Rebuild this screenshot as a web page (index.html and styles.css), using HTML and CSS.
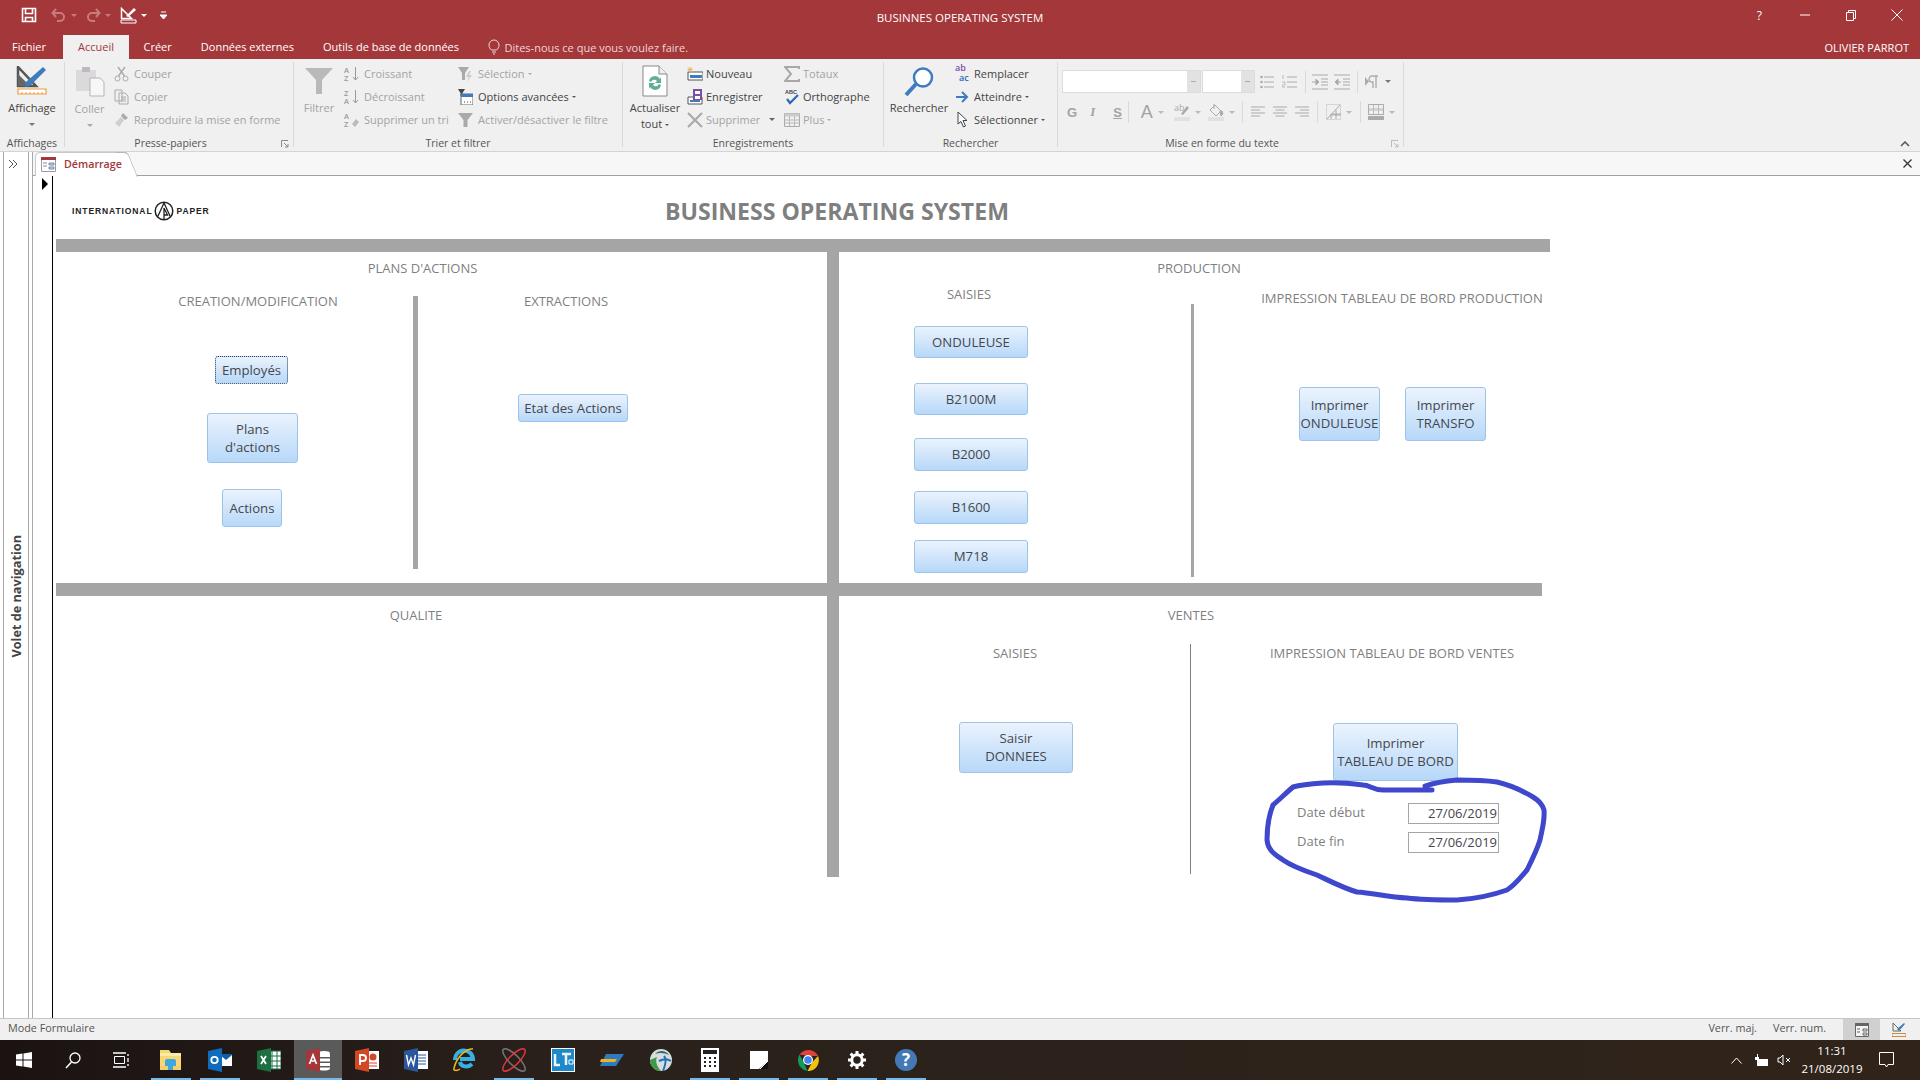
FILE: index.html
```html
<!DOCTYPE html>
<html lang="fr">
<head>
  <meta charset="UTF-8">
  <title>BUSINNES OPERATING SYSTEM</title>
  <link rel="stylesheet" href="styles.css">
</head>
<body>

  <!-- title bar -->
  <div class="titlebar">
    <div class="qat">
      <svg class="qat-save" width="16" height="16" viewBox="0 0 16 16"><path d="M1.500 1.500h13v13h-13z M4.500 1.500v5h7v-5 M4.500 14.500v-4h7v4" fill="none" stroke="#fff" stroke-width="1.600"/></svg>
      <svg class="qat-undo" width="16" height="14" viewBox="0 0 16 14"><path d="M5 1 1.500 5 5 9 M2 5h7a4 4 0 0 1 0 8H6" fill="none" stroke="#c97a7d" stroke-width="2"/></svg>
      <span class="qat-caret dim"></span>
      <svg class="qat-redo" width="16" height="14" viewBox="0 0 16 14"><path d="M11 1l3.500 4L11 9 M14 5H7a4 4 0 0 0 0 8h3" fill="none" stroke="#c97a7d" stroke-width="2"/></svg>
      <span class="qat-caret dim"></span>
      <svg class="qat-view" width="17" height="17" viewBox="0 0 17 17"><path d="M1.500 1.500v10h10z" fill="none" stroke="#fff" stroke-width="1.500"/><path d="M6 9l8-8 2 2-8 7z" fill="#fff"/><path d="M1 13h15v3H1z" fill="none" stroke="#fff"/></svg>
      <span class="qat-caret"></span>
      <svg class="qat-more" width="7" height="8" viewBox="0 0 7 8"><path d="M1 1h5M0 4h7l-3.500 4z" stroke="#fff" fill="#fff"/></svg>
    </div>
    <div class="app-title">BUSINNES OPERATING SYSTEM</div>
    <div class="win-btns">
      <span class="win-help">?</span>
      <svg width="12" height="12" viewBox="0 0 12 12"><path d="M1 6h10" stroke="#fff"/></svg>
      <svg width="12" height="12" viewBox="0 0 12 12"><path d="M1.500 3.500h7v8h-7z M3.500 3V1.500h7v8H9" fill="none" stroke="#fff"/></svg>
      <svg width="12" height="12" viewBox="0 0 12 12"><path d="M.500.500l11 11M11.500.500l-11 11" stroke="#fff"/></svg>
    </div>
  </div>

  <!-- ribbon tabs -->
  <div class="tabs">
    <span class="tab tab-file">Fichier</span>
    <span class="tab tab-active">Accueil</span>
    <span class="tab">Créer</span>
    <span class="tab">Données externes</span>
    <span class="tab">Outils de base de données</span>
    <span class="tell-me">
      <svg width="12" height="16" viewBox="0 0 12 16"><path d="M3.500 11C2 9.500 1 8.500 1 6a5 5 0 0 1 10 0c0 2.500-1 3.500-2.500 5z M4 13h4 M5 15h2" fill="none" stroke="#f0d8d8"/></svg>
      Dites-nous ce que vous voulez faire.
    </span>
    <span class="user">OLIVIER PARROT</span>
  </div>

  <!-- ribbon -->
  <div class="ribbon">
    <div class="group g-views">
      <div class="group-body">
        <div class="big big-view">
          <svg width="32" height="30" viewBox="0 0 32 30"><path d="M2 1v19h18z" fill="none" stroke="#555" stroke-width="2.500"/><path d="M2 8l12 12H2z" fill="#666"/><path d="M10 16 27 1l3 3-15 15-6 2z" fill="#3f7cbf"/><path d="M2 23h28v5H2z" fill="#fff" stroke="#ed9b40" stroke-width="1.200"/><path d="M6 26v2M10 26v2M14 26v2M18 26v2M22 26v2M26 26v2" stroke="#ed9b40"/></svg>
          <span>Affichage</span>
          <i class="caret"></i>
        </div>
      </div>
      <div class="group-label">Affichages</div>
    </div>

    <div class="group g-clip">
      <div class="group-body">
        <div class="big big-paste off">
          <svg width="30" height="31" viewBox="0 0 30 31"><path d="M1 4h20v21H1z" fill="#dcd9dc"/><path d="M7 1h8v5H7z" fill="#bdbabd"/><path d="M15 12h10l4 4v14H15z" fill="#f7f7f7" stroke="#b5b5b5"/></svg>
          <span>Coller</span>
          <i class="caret"></i>
        </div>
        <div class="col col-clip off">
          <div class="item"><svg width="15" height="16" viewBox="0 0 15 16"><circle cx="3.500" cy="12.500" r="2.500" fill="none" stroke="#aaa"/><circle cx="11.500" cy="12.500" r="2.500" fill="none" stroke="#aaa"/><path d="M4.500 10 11 1M10.500 10 4 1" stroke="#aaa" stroke-width="1.400"/></svg>Couper</div>
          <div class="item"><svg width="15" height="16" viewBox="0 0 15 16"><path d="M1 1h7v11H1z M5 4h6l3 3v8H5z" fill="#f0f0f0" stroke="#aaa"/><path d="M7 8h5M7 10h5M7 12h5" stroke="#aaa"/></svg>Copier</div>
          <div class="item item-wide"><svg width="15" height="16" viewBox="0 0 15 16"><path d="M9 1l5 5-3 2-4-4z" fill="#aaa"/><path d="M7 5l3 3-5 7-4-4z" fill="#cfcfcf"/></svg>Reproduire la mise en forme</div>
        </div>
      </div>
      <div class="group-label label-launch">Presse-papiers
        <svg class="launcher" width="8" height="8" viewBox="0 0 8 8"><path d="M.500 7V.500H7 M3 3l4 4M4 7h3V4" fill="none" stroke="#8a8a8a"/></svg>
      </div>
    </div>

    <div class="group g-sort">
      <div class="group-body">
        <div class="big big-filter off">
          <svg width="30" height="28" viewBox="0 0 30 28"><path d="M1 1h28L18 13v14h-6V13z" fill="#b9b9b9"/></svg>
          <span>Filtrer</span>
        </div>
        <div class="col col-sort off">
          <div class="item"><span class="az">A<br>Z</span><svg width="7" height="16" viewBox="0 0 7 16"><path d="M3.500 1v13M1 11l2.500 3L6 11" fill="none" stroke="#999"/></svg>Croissant</div>
          <div class="item"><span class="az">Z<br>A</span><svg width="7" height="16" viewBox="0 0 7 16"><path d="M3.500 1v13M1 11l2.500 3L6 11" fill="none" stroke="#999"/></svg>Décroissant</div>
          <div class="item"><span class="az">A<br>Z</span><svg width="7" height="16" viewBox="0 0 7 16"><path d="M0 12l4-5 3 3-4 5z" fill="#bbb"/></svg>Supprimer un tri</div>
        </div>
        <div class="col col-filter">
          <div class="item off"><svg width="15" height="16" viewBox="0 0 15 16"><path d="M0 1h11L7 7v7H4V7z" fill="#aaa"/><path d="M11 5 8 11h3l-2 5 5-7h-3l2-4z" fill="#ccc"/></svg>Sélection<i class="caret-in"></i></div>
          <div class="item"><svg width="15" height="16" viewBox="0 0 15 16"><path d="M0 0h7L4.500 4v3h-2V4z" fill="#444"/><path d="M3 5h12v11H3z" fill="#fff" stroke="#666"/><path d="M3 5h12v3H3z" fill="#3f7cbf"/><path d="M6 13h1M9 13h1M12 13h1" stroke="#444"/></svg>Options avancées<i class="caret-in"></i></div>
          <div class="item off"><svg width="15" height="16" viewBox="0 0 15 16"><path d="M0 1h15L9.500 8v7h-4V8z" fill="#aaa"/></svg>Activer/désactiver le filtre</div>
        </div>
      </div>
      <div class="group-label">Trier et filtrer</div>
    </div>

    <div class="group g-records">
      <div class="group-body">
        <div class="big big-refresh">
          <svg width="26" height="32" viewBox="0 0 26 32"><path d="M1 1h16l8 8v22H1z" fill="#fff" stroke="#888"/><path d="M17 1v8h8" fill="#eee" stroke="#888"/><path d="M7 16a6 6 0 0 1 11-2l1-2v6h-6l2-2a3.500 3.500 0 0 0-6 1z M19 20a6 6 0 0 1-11 2l-1 2v-6h6l-2 2a3.500 3.500 0 0 0 6-1z" fill="#63ad92"/></svg>
          <span>Actualiser</span>
          <span>tout<i class="caret-in"></i></span>
        </div>
        <div class="col col-new">
          <div class="item"><svg width="16" height="16" viewBox="0 0 16 16"><path d="M1 6h15v8H1z" fill="#fff" stroke="#555"/><path d="M3 9h12v3H3z" fill="#3f7cbf"/><path d="M3 1v5M.500 3.500h5M1 1.500l4 4M5 1.500l-4 4" stroke="#eeb75c"/></svg>Nouveau</div>
          <div class="item"><svg width="16" height="16" viewBox="0 0 16 16"><path d="M1 8h14v7H1z" fill="#fff" stroke="#555"/><path d="M3 11h10v2H3z" fill="#3f7cbf"/><path d="M6 0h9v11H6z" fill="#7a4fa8"/><path d="M8 2h5v3H8zM8 7h5v3H8z" fill="#fff"/></svg>Enregistrer</div>
          <div class="item off item-del"><svg width="16" height="16" viewBox="0 0 16 16"><path d="M1 1l14 14M15 1 1 15" stroke="#aaa" stroke-width="2.200"/></svg>Supprimer<i class="caret-del"></i></div>
        </div>
        <div class="col col-totals">
          <div class="item off"><svg width="16" height="16" viewBox="0 0 16 16"><path d="M15 3V1H1l6 7-6 7h14v-2" fill="none" stroke="#a8a8a8" stroke-width="2"/></svg>Totaux</div>
          <div class="item"><svg class="icon-text" width="16" height="17" viewBox="0 0 16 17"><text x="1" y="6" class="abc">ABC</text><path d="M3 11l3 4 8-8" fill="none" stroke="#2c6ab0" stroke-width="2.200"/></svg>Orthographe</div>
          <div class="item off"><svg width="16" height="16" viewBox="0 0 16 16"><path d="M.500 1.500h15v13H.500z" fill="#efefef" stroke="#aaa"/><path d="M.500 1.500h15v3H.500z" fill="#ccc"/><path d="M1 8h14M1 11h14M5.500 4v10M10.500 4v10" stroke="#bbb"/></svg>Plus<i class="caret-in"></i></div>
        </div>
      </div>
      <div class="group-label">Enregistrements</div>
    </div>

    <div class="group g-find">
      <div class="group-body">
        <div class="big big-find">
          <svg width="30" height="31" viewBox="0 0 30 31"><circle cx="19" cy="11.500" r="9" fill="#fff" stroke="#3f7cbf" stroke-width="2.500"/><path d="M12 18 2 29" stroke="#3f7cbf" stroke-width="4"/></svg>
          <span>Rechercher</span>
        </div>
        <div class="col col-find">
          <div class="item"><svg class="icon-text" width="17" height="17" viewBox="0 0 17 17"><text x="1" y="6" class="ab">ab</text><text x="5" y="16" class="ac">ac</text></svg>Remplacer</div>
          <div class="item"><svg width="17" height="16" viewBox="0 0 17 16"><path d="M2 8h11M8 3l5 5-5 5" fill="none" stroke="#3f7cbf" stroke-width="2"/></svg>Atteindre<i class="caret-in"></i></div>
          <div class="item"><svg width="17" height="17" viewBox="0 0 17 17"><path d="M4 1v12l3-2.500L9.500 16l2-1L9 9.500h4z" fill="#fff" stroke="#444"/></svg>Sélectionner<i class="caret-in"></i></div>
        </div>
      </div>
      <div class="group-label">Rechercher</div>
    </div>

    <div class="group g-font">
      <div class="group-body font-body">
        <div class="font-row">
          <div class="combo combo-name"><i class="caret"></i></div>
          <div class="combo combo-size"><i class="caret"></i></div>
          <svg class="fi-bul" width="14" height="16" viewBox="0 0 14 16"><path d="M4 3h10M4 8h10M4 13h10" stroke="#aaa"/><circle cx="1.500" cy="3" r="1.300" fill="#aaa"/><circle cx="1.500" cy="8" r="1.300" fill="#aaa"/><circle cx="1.500" cy="13" r="1.300" fill="#aaa"/></svg>
          <svg class="fi-num" width="15" height="16" viewBox="0 0 15 16"><path d="M5 3h10M5 8h10M5 13h10" stroke="#aaa"/><path d="M1 1v4M0 8h3v3H0v2h3" fill="none" stroke="#bbb"/></svg>
          <span class="fsep fsep-a"></span>
          <svg width="16" height="16" viewBox="0 0 16 16"><path d="M0 1h16M9 5h7M9 8h7M9 11h7M0 15h16" stroke="#aaa"/><path d="M0 8h4M4 5l3 3-3 3z" stroke="#aaa" fill="#aaa"/></svg>
          <svg class="fi-out" width="16" height="16" viewBox="0 0 16 16"><path d="M0 1h16M9 5h7M9 8h7M9 11h7M0 15h16" stroke="#aaa"/><path d="M3 8h4M4 5 1 8l3 3z" stroke="#aaa" fill="#aaa"/></svg>
          <span class="fsep fsep-b"></span>
          <svg class="fi-para" width="14" height="14" viewBox="0 0 14 14"><path d="M0 2v9l4-4.500z" fill="#aaa"/><path d="M9 1H7a3 3 0 0 0 0 6h1V13M11 1v12M7 1h6" fill="none" stroke="#aaa" stroke-width="1.300"/></svg>
          <i class="caret fi-caret"></i>
        </div>
        <div class="font-row font-row2">
          <b class="fmt fmt-g">G</b>
          <i class="fmt fmt-i">I</i>
          <span class="fmt fmt-s">S</span>
          <span class="fsep fsep-c"></span>
          <span class="fmt fmt-a">A</span>
          <i class="caret"></i>
          <svg class="fi-hl icon-text" width="16" height="18" viewBox="0 0 16 18"><text x="0" y="8" class="hl">ab</text><path d="M7 11l6-8 2 2-6 7z" fill="#aaa"/><path d="M0 14h16v4H0z" fill="#e3dfe3"/></svg>
          <i class="caret"></i>
          <svg class="fi-fill" width="16" height="18" viewBox="0 0 16 18"><path d="M2 7l5-5 6 6-5 5z" fill="none" stroke="#aaa"/><path d="M6 1v5M12 8h2l1 3-2 2z" stroke="#aaa" fill="#aaa"/><path d="M0 14h16v4H0z" fill="#e3dfe3"/></svg>
          <i class="caret"></i>
          <span class="fsep fsep-d"></span>
          <svg width="14" height="12" viewBox="0 0 14 12"><path d="M0 1h14M0 4h9M0 7h14M0 10h9" stroke="#aaa"/></svg>
          <svg class="fi-al" width="14" height="12" viewBox="0 0 14 12"><path d="M0 1h14M2.500 4h9M0 7h14M2.500 10h9" stroke="#aaa"/></svg>
          <svg class="fi-al" width="14" height="12" viewBox="0 0 14 12"><path d="M0 1h14M5 4h9M0 7h14M5 10h9" stroke="#aaa"/></svg>
          <span class="fsep fsep-e"></span>
          <svg width="15" height="16" viewBox="0 0 15 16"><path d="M.500.500h14v15H.500z" fill="none" stroke="#bbb" stroke-dasharray="1 1"/><path d="M1 15 14 1M5 15V10h10M10 15V6M5 11h10" stroke="#aaa" fill="none"/></svg>
          <i class="caret fi-c2"></i>
          <span class="fsep fsep-f"></span>
          <svg width="16" height="16" viewBox="0 0 16 16"><path d="M.500.500h15v10H.500z" fill="#efefef" stroke="#aaa"/><path d="M1 4h14v3H1z" fill="#d8d0d8"/><path d="M5.500 1v9M10.500 1v9" stroke="#bbb"/><path d="M0 12h16v4H0z" fill="#aaa"/></svg>
          <i class="caret fi-c3"></i>
        </div>
      </div>
      <div class="group-label label-launch">Mise en forme du texte
        <svg class="launcher" width="8" height="8" viewBox="0 0 8 8"><path d="M.500 7V.500H7 M3 3l4 4M4 7h3V4" fill="none" stroke="#bbb"/></svg>
      </div>
    </div>

    <svg class="collapse" width="10" height="6" viewBox="0 0 10 6"><path d="M1 5l4-4 4 4" fill="none" stroke="#555" stroke-width="1.500"/></svg>
  </div>

  <!-- workspace -->
  <div class="workspace">
    <div class="nav-pane">
      <svg class="nav-arrows" width="10" height="8" viewBox="0 0 10 8"><path d="M1 0l4 4-4 4M5 0l4 4-4 4" fill="none" stroke="#555"/></svg>
      <div class="nav-title">Volet de navigation</div>
    </div>
    <div class="main">
      <div class="doc-tabs">
        <div class="doc-tab">
          <svg width="15" height="15" viewBox="0 0 15 15"><path d="M.500.500h14v14H.500z" fill="#fff" stroke="#9a9ab0"/><path d="M0 0h15v3H0z" fill="#a4373a"/><path d="M2 6h4M2 9h4M8 6h5v2H8zM8 10h5v2H8z" stroke="#7b8fa8" fill="#c7d2de"/></svg>
          <span class="doc-name">Démarrage</span>
        </div>
        <svg class="doc-close" width="9" height="9" viewBox="0 0 9 9"><path d="M.500.500l8 8M8.500.500l-8 8" stroke="#333" stroke-width="1.300"/></svg>
      </div>
      <div class="doc">
        <div class="selector"><span class="sel-arrow"></span></div>

        <div class="form">
          <div class="form-head">
            <div class="logo">
              <span>INTERNATIONAL</span>
              <svg width="20" height="20" viewBox="0 0 20 20"><circle cx="10" cy="10" r="8.800" fill="#fff" stroke="#222" stroke-width="1.500"/><path d="M10 2 3.500 16M10 2l6.500 14M10 7v11M10 7l3.500 7H10" fill="none" stroke="#222" stroke-width="1.300"/></svg>
              <span>PAPER</span>
            </div>
            <div class="form-title">BUSINESS OPERATING SYSTEM</div>
          </div>
          <div class="hbar hbar-top"></div>

          <div class="form-body">
            <!-- plans d'actions -->
            <section class="cell">
              <div class="lbl lbl-plans">PLANS D'ACTIONS</div>
              <div class="cols">
                <div class="pane pane-create">
                  <div class="lbl lbl-create">CREATION/MODIFICATION</div>
                  <div class="btn btn-emp">Employés</div>
                  <div class="btn btn-plans">Plans<br>d'actions</div>
                  <div class="btn btn-act">Actions</div>
                </div>
                <div class="vbar vbar-plans"></div>
                <div class="pane">
                  <div class="lbl lbl-extract">EXTRACTIONS</div>
                  <div class="btn btn-etat">Etat des Actions</div>
                </div>
              </div>
            </section>

            <div class="vbar-main"></div>

            <!-- production -->
            <section class="cell">
              <div class="lbl lbl-prod">PRODUCTION</div>
              <div class="cols">
                <div class="pane pane-saisies">
                  <div class="lbl lbl-saisies">SAISIES</div>
                  <div class="btn btn-line btn-ond">ONDULEUSE</div>
                  <div class="btn btn-line btn-b21">B2100M</div>
                  <div class="btn btn-line btn-b20">B2000</div>
                  <div class="btn btn-line btn-b16">B1600</div>
                  <div class="btn btn-line btn-m7">M718</div>
                </div>
                <div class="vbar vbar-prod"></div>
                <div class="pane">
                  <div class="lbl lbl-print">IMPRESSION TABLEAU DE BORD PRODUCTION</div>
                  <div class="print-btns">
                    <div class="btn btn-print">Imprimer<br>ONDULEUSE</div>
                    <div class="btn btn-print">Imprimer<br>TRANSFO</div>
                  </div>
                </div>
              </div>
            </section>

            <div class="hbar hbar-mid"></div>

            <!-- qualite -->
            <section class="cell cell-low">
              <div class="lbl lbl-qual">QUALITE</div>
            </section>

            <!-- ventes -->
            <section class="cell cell-low">
              <div class="lbl lbl-ventes">VENTES</div>
              <div class="cols">
                <div class="pane pane-vsaisies">
                  <div class="lbl lbl-vsaisies">SAISIES</div>
                  <div class="btn btn-saisir">Saisir<br>DONNEES</div>
                </div>
                <div class="vline"></div>
                <div class="pane">
                  <div class="lbl lbl-vprint">IMPRESSION TABLEAU DE BORD VENTES</div>
                  <div class="btn btn-tab">Imprimer<br>TABLEAU DE BORD</div>
                  <div class="date-row date-first"><span>Date début</span><div class="field">27/06/2019</div></div>
                  <div class="date-row"><span>Date fin</span><div class="field">27/06/2019</div></div>
                </div>
              </div>
            </section>
          </div>

          <!-- hand drawn circle, sits over the form -->
          <svg class="scribble" width="295" height="130" viewBox="0 0 295 130"><path d="M174 15 125 15C115 15 112 10 105 10 90 8 78 7 65 8 50 9 42 10 35 12 28 18 22 24 15 30 11 40 9 55 9 65 10 76 18 80 25 85 35 92 47 96 59 100 72 106 85 113 99 117 115 118 130 122 149 123 165 125 182 125 199 125 215 124 235 120 249 115 257 110 263 102 269 95 274 85 279 75 282 65 284 55 287 45 286 35 284 28 280 25 275 22 265 16 252 10 239 7 225 5 212 5 199 5 188 6 176 8 167 11" fill="none" stroke="#3f48cc" stroke-width="5" stroke-linecap="round" stroke-linejoin="round"/></svg>
        </div>
      </div>
    </div>
  </div>

  <!-- status bar -->
  <div class="statusbar">
    <span class="status-mode">Mode Formulaire</span>
    <span class="status-key">Verr. maj.</span>
    <span class="status-key">Verr. num.</span>
    <span class="status-view status-on"><svg width="14" height="14" viewBox="0 0 14 14"><path d="M.500.500h13v13H.500z" fill="#f5f5f5" stroke="#666"/><path d="M0 0h14v3H0z" fill="#666"/><path d="M2 6h3M2 9h3M8 6h4v2H8zM8 10h4v2H8z" stroke="#666" fill="none"/></svg></span>
    <span class="status-view"><svg width="14" height="16" viewBox="0 0 14 16"><path d="M1 1v8h8z" fill="none" stroke="#666"/><path d="M5 7l7-6 1 1-6 7z" fill="#3f7cbf"/><path d="M0 11.500h14v3H0z" fill="none" stroke="#c98f3f"/></svg></span>
  </div>

  <!-- taskbar -->
  <div class="taskbar">
    <div class="task"><svg width="16" height="16" viewBox="0 0 16 16"><path d="M0 2.500 6.500 1.600V7.500H0zM7.500 1.400 16 0v7.500H7.500zM0 8.500h6.500v5.900L0 13.500zM7.500 8.500H16V16l-8.500-1.400z" fill="#fff"/></svg></div>
    <div class="task"><svg width="16" height="17" viewBox="0 0 16 17"><circle cx="10" cy="6" r="5" fill="none" stroke="#fff" stroke-width="1.300"/><path d="M6.500 10 1 16" stroke="#fff" stroke-width="1.500"/></svg></div>
    <div class="task"><svg class="icon-taskview" width="17" height="16" viewBox="0 0 17 16"><path d="M2.500 4.500h10v7h-10z" fill="none" stroke="#fff"/><path d="M1 1h13M1 15h13M16 2v2M16 6v4M16 12v2" stroke="#fff" stroke-width="1.300"/></svg></div>
    <div class="task task-run"><svg width="22" height="20" viewBox="0 0 22 20"><path d="M0 0h9l2 3h10v17H0z" fill="#f7d774"/><path d="M0 3h21v3H0z" fill="#fbe9a6"/><path d="M5 16v-5a2 2 0 0 1 2-2h7a2 2 0 0 1 2 2v5h-3v-3H8v3z" fill="#3fa7e0"/><path d="M0 16h21v4H0z" fill="#f3cf6c"/><path d="M8 13h5v7H8z" fill="#3fa7e0"/></svg></div>
    <div class="task task-run"><svg width="24" height="24" viewBox="0 0 24 24"><path d="M12 7h12v11H12z" fill="#fff"/><path d="M12 7l6 5 6-5v-1H12z" fill="#0f5ea8"/><path d="M0 3l14-3v24L0 21z" fill="#0f6cbd"/><circle cx="6.500" cy="12" r="3.200" fill="none" stroke="#fff" stroke-width="1.800"/></svg></div>
    <div class="task"><svg width="24" height="24" viewBox="0 0 24 24"><path d="M12 3h12v18H12z" fill="#fff" stroke="#1d6f42"/><path d="M15 3v18M20 3v18M12 8h12M12 13h12M12 18h12" stroke="#1d6f42"/><path d="M0 3l14-3v24L0 21z" fill="#1d6f42"/><path d="M4 8l5 8M9 8l-5 8" stroke="#fff" stroke-width="1.800"/></svg></div>
    <div class="task task-run task-active"><svg width="24" height="24" viewBox="0 0 24 24"><ellipse cx="18" cy="5" rx="6" ry="2" fill="#fff"/><path d="M12 6h12v3H12zM12 10.500h12v3H12zM12 15h12v3H12zM12 19.500h12v1a6 2 0 0 1-12 0z" fill="#fff"/><path d="M0 3l14-3v24L0 21z" fill="#a4373a"/><path d="M3.500 16 7 7l3.500 9M4.800 13h4.400" fill="none" stroke="#fff" stroke-width="1.700"/></svg></div>
    <div class="task"><svg width="24" height="24" viewBox="0 0 24 24"><path d="M12 3h12v18H12z" fill="#fff"/><circle cx="18" cy="9" r="3.500" fill="#d24726"/><path d="M14 15h8M14 18h8" stroke="#d24726"/><path d="M0 3l14-3v24L0 21z" fill="#d24726"/><path d="M5 17V7h3a3 3 0 0 1 0 6H5" fill="none" stroke="#fff" stroke-width="1.800"/></svg></div>
    <div class="task"><svg width="24" height="24" viewBox="0 0 24 24"><path d="M12 3h12v18H12z" fill="#fff"/><path d="M14 7h8M14 10h8M14 13h8M14 16h8" stroke="#2b579a"/><path d="M0 3l14-3v24L0 21z" fill="#2b579a"/><path d="M2.500 7l2 10 2.500-7 2.500 7 2-10" fill="none" stroke="#fff" stroke-width="1.400"/></svg></div>
    <div class="task"><svg width="24" height="24" viewBox="0 0 24 24"><path d="M2 12a9 9 0 0 1 18-1H7" fill="none" stroke="#38b0e3" stroke-width="4"/><path d="M7 14c1 5 8 6 12 2" fill="none" stroke="#38b0e3" stroke-width="4"/><path d="M20 1C14 0 4 8 1 20c-1 3 3 3 6 1" fill="none" stroke="#f2b90f" stroke-width="1.500"/></svg></div>
    <div class="task task-run"><svg width="24" height="24" viewBox="0 0 24 24"><g fill="none" stroke-width="1.500"><ellipse cx="12" cy="12" rx="15" ry="5" transform="rotate(45 12 12)" stroke="#777"/><ellipse cx="12" cy="12" rx="15" ry="5" transform="rotate(-45 12 12)" stroke="#e5363d"/></g></svg></div>
    <div class="task"><svg width="24" height="24" viewBox="0 0 24 24"><path d="M0 0h24v24H0z" fill="#fff"/><path d="M1 1h22v22H1z" fill="#1e88c9"/><path d="M4 6v11h5M11 6h9M15 6v11" fill="none" stroke="#eaf4fb" stroke-width="2.500"/><path d="M18 12h4v4h-4z" fill="none" stroke="#fff"/></svg></div>
    <div class="task"><svg width="24" height="12" viewBox="0 0 24 12"><path d="M6 0h18l-8 12H0z" fill="#2d7cc1"/><path d="M1 5h16l-2 3H0z" fill="#f2b21b"/></svg></div>
    <div class="task"><svg width="22" height="22" viewBox="0 0 22 22"><circle cx="11" cy="11" r="11" fill="#d9dcdc"/><path d="M0 11a11 11 0 0 0 11 11c-4-5-6-9-4-14z" fill="#3e9a45"/><path d="M5 5c5-5 11-3 14 1-4-2-9-3-14-1z" fill="#2c6f6f"/><path d="M14 7c3 3 1 10-1 15M9 12c4-2 9-2 12 0" fill="none" stroke="#1d71b8" stroke-width="2"/></svg></div>
    <div class="task task-run"><svg width="18" height="24" viewBox="0 0 18 24"><path d="M0 0h18v24H0z" fill="#fff"/><path d="M2 2h14v4H2z" fill="#222"/><path d="M3 10h2M8 10h2M13 10h2M3 14h2M8 14h2M13 14h2M3 18h2M8 18h2M13 18h2" stroke="#222" stroke-width="2"/></svg></div>
    <div class="task task-run"><svg width="18" height="18" viewBox="0 0 18 18"><path d="M0 0h18v18H0z" fill="#fff"/><path d="M18 10v8H9z" fill="#111"/><path d="M10 18l8-8" stroke="#fff"/></svg></div>
    <div class="task task-run"><svg width="22" height="22" viewBox="0 0 22 22"><path d="M2.500 5.500A10.800 10.800 0 0 1 21 7H11z" fill="#db4437"/><path d="M21 7a10.800 10.800 0 0 1-10.500 15L15 13.500z" fill="#f4c20d"/><path d="M2.500 5.500 7 14l3.500 8A11 11 0 0 1 2.500 5.500z" fill="#0f9d58"/><circle cx="11" cy="11" r="5" fill="#fff"/><circle cx="11" cy="11" r="3.800" fill="#4285f4"/></svg></div>
    <div class="task task-run"><svg width="18" height="18" viewBox="0 0 18 18"><circle cx="9" cy="9" r="5.200" fill="none" stroke="#fff" stroke-width="3"/><path d="M9 0v4M9 14v4M0 9h4M14 9h4M2.600 2.600l2.900 2.900M12.500 12.500l2.900 2.900M15.400 2.600l-2.900 2.900M5.500 12.500l-2.900 2.900" stroke="#fff" stroke-width="3"/></svg></div>
    <div class="task task-run"><svg width="22" height="22" viewBox="0 0 22 22"><circle cx="11" cy="11" r="11" fill="#4379b5"/><text x="11" y="17" class="help-mark">?</text></svg></div>

    <div class="tray">
      <svg width="11" height="7" viewBox="0 0 11 7"><path d="M.500 6.500l5-5.500 5 5.500" fill="none" stroke="#fff"/></svg>
      <svg class="tray-bat" width="14" height="14" viewBox="0 0 14 14"><path d="M1 4h2V1h1v3h1v3H1z" fill="#fff"/><path d="M3 6h11v7H3z" fill="#fff"/></svg>
      <svg class="tray-vol" width="14" height="14" viewBox="0 0 14 14"><path d="M1 5h2l3-3v10L3 9H1z" fill="none" stroke="#fff"/><path d="M9 5l4 4M13 5 9 9" stroke="#fff"/></svg>
      <div class="clock"><span>11:31</span><span>21/08/2019</span></div>
      <svg class="tray-note" width="15" height="16" viewBox="0 0 15 16"><path d="M.500.500h14v12H9l-1.500 2.500L6 12.500H.500z" fill="none" stroke="#fff"/></svg>
    </div>
  </div>

</body>
</html>
```

FILE: styles.css
```css
* {
  box-sizing: border-box;
}
html, body {
  margin: 0;
  height: 100%;
}
body {
  width: 1920px;
  height: 1080px;
  overflow: hidden;
  display: flex;
  flex-direction: column;
  font-family: "Open Sans", "Noto Sans", sans-serif;
  font-size: 11px;
  color: #444;
  background: #fff;
}
svg {
  display: block;
  flex: none;
}
.icon-text {
  overflow: visible;
}

/* title bar */
.titlebar {
  height: 35px;
  background: #a4373a;
  color: #fff;
  display: flex;
  align-items: flex-start;
  position: relative;
}
.qat {
  width: 400px;
  display: flex;
  align-items: center;
  height: 30px;
  padding-left: 21px;
}
.qat-undo { margin-left: 14px; }
.qat-redo { margin-left: 8px; }
.qat-view { margin-left: 9px; }
.qat-more { margin-left: 13px; }
.qat-caret {
  width: 0;
  height: 0;
  margin-left: 4px;
  border: 3px solid transparent;
  border-top-color: #fff;
  border-bottom: 0;
}
.qat-caret.dim { border-top-color: #c97a7d; }
.app-title {
  width: 1120px;
  text-align: center;
  font-size: 11.500px;
  line-height: 35px;
}
.win-btns {
  flex: 1;
  display: flex;
  justify-content: flex-end;
  align-items: center;
  gap: 34px;
  height: 30px;
  padding-right: 17px;
}
.win-help { font-size: 12px; margin-right: 3px; }

/* tabs */
.tabs {
  height: 24px;
  background: #a4373a;
  color: #fff;
  display: flex;
  align-items: center;
  font-size: 11px;
}
.tab {
  height: 24px;
  line-height: 24px;
  padding: 0 14.500px;
}
.tab-file {
  width: 63px;
  padding: 0 0 0 12px;
}
.tab-active {
  width: 66px;
  padding: 0;
  text-align: center;
  background: #f0f0f0;
  color: #a4373a;
}
.tell-me {
  display: flex;
  align-items: center;
  gap: 5px;
  margin-left: 14px;
  color: #f0d5d5;
  white-space: nowrap;
}
.user {
  margin-left: auto;
  padding-right: 11px;
}

/* ribbon */
.ribbon {
  height: 93px;
  background: #f0f0f0;
  border-bottom: 1px solid #d4d4d4;
  display: flex;
  position: relative;
}
.group {
  border-right: 1px solid #dadada;
  margin-top: 3px;
  height: 85px;
  flex: none;
}
.g-views { width: 65px; }
.g-clip { width: 229px; }
.g-sort { width: 329px; }
.g-records { width: 261px; }
.g-find { width: 174px; }
.g-font { width: 346px; }
.group-body {
  height: 72px;
  display: flex;
  position: relative;
}
.group-label {
  height: 13px;
  line-height: 18px;
  text-align: center;
  color: #555;
  font-size: 10.500px;
  position: relative;
}
.label-launch { padding-right: 17px; }
.launcher {
  position: absolute;
  right: 4px;
  top: 6px;
}
.big {
  display: flex;
  flex-direction: column;
  align-items: center;
  padding-top: 4px;
  white-space: nowrap;
  line-height: 16px;
}
.big svg { margin-bottom: 4px; }
.big-view { width: 64px; }
.big-view svg { margin-bottom: 4px; }
.big-view .caret { margin-top: 7px; }
.big-paste { width: 49px; }
.big-paste .caret { margin-top: 7px; }
.big-filter { width: 50px; padding-top: 5px; }
.big-filter svg { margin-bottom: 5px; }
.big-refresh { width: 64px; padding-top: 3px; }
.big-refresh svg { margin-bottom: 3px; }
.big-find { width: 70px; }
.big-find svg { margin-bottom: 3px; }
.off, .off .item { color: #a3a3a3; }
.col {
  display: flex;
  flex-direction: column;
}
.item {
  height: 23px;
  display: flex;
  align-items: center;
  gap: 5px;
  white-space: nowrap;
  color: #444;
}
.item.off { color: #a3a3a3; }
.col-sort { width: 114px; }
.col-new { width: 97px; }
.col-totals { width: 90px; }
.col-new .item, .col-totals .item, .col-find .item { gap: 3px; }
.az {
  font-size: 7.500px;
  line-height: 8px;
  width: 7px;
  color: #999;
  font-weight: 600;
  margin-right: -4px;
}
.caret {
  display: block;
  width: 0;
  height: 0;
  border: 3px solid transparent;
  border-top-color: #777;
  border-bottom: 0;
}
.off .caret { border-top-color: #aaa; }
.caret-in {
  display: inline-block;
  vertical-align: middle;
  width: 0;
  height: 0;
  margin-left: 3px;
  border: 2.500px solid transparent;
  border-top-color: #555;
  border-bottom: 0;
}
.item .caret-in { margin-left: -2px; }
.col-new .caret-in, .col-totals .caret-in, .col-find .caret-in { margin-left: 0; }
.off .caret-in { border-top-color: #aaa; }
.caret-del {
  display: inline-block;
  width: 0;
  height: 0;
  margin-left: 6px;
  border: 3px solid transparent;
  border-top-color: #666;
  border-bottom: 0;
}
.abc { font: 700 5.500px "Liberation Sans", sans-serif; fill: #444; }
.ab { font: 600 9px "Open Sans", sans-serif; fill: #7a4fa8; }
.ac { font: 600 9px "Open Sans", sans-serif; fill: #2c6ab0; }
.hl { font: 400 9px "Open Sans", sans-serif; fill: #aaa; }
.help-mark {
  font: 700 17px "Open Sans", sans-serif;
  fill: #fff;
  text-anchor: middle;
}

/* font group of the ribbon */
.font-body {
  flex-direction: column;
  padding-left: 4px;
}
.font-row {
  display: flex;
  align-items: center;
  height: 23px;
  margin-top: 8px;
}
.font-row2 {
  height: 24px;
  margin-top: 7px;
}
.combo {
  height: 23px;
  background: #fff;
  border: 1px solid #dcdcdc;
  display: flex;
  justify-content: flex-end;
  align-items: center;
}
.combo .caret {
  width: 13px;
  height: 21px;
  border: 0;
  background: #e2e2e2 linear-gradient(#aaa, #aaa) center no-repeat;
  background-size: 5px 1px;
}
.combo-name { width: 139px; margin-right: 1px; }
.combo-size { width: 53px; }
.fi-bul { margin-left: 5px; }
.fi-num { margin-left: 8px; }
.fi-out { margin-left: 6px; }
.fi-para { margin-left: 7px; }
.fi-caret { margin-left: 6px; }
.fsep {
  display: block;
  width: 1px;
  height: 22px;
  background: #dadada;
}
.fsep-a { margin: 0 6px 0 8px; }
.fsep-b { margin-left: 7px; }
.fmt {
  font-family: "Liberation Sans", sans-serif;
  font-size: 13px;
  color: #a3a3a3;
  font-weight: 700;
  font-style: normal;
}
.fmt-g { margin-left: 5px; }
.fmt-i { margin-left: 13px; font-style: italic; font-family: "Liberation Serif", serif; }
.fmt-s { margin-left: 18px; text-decoration: underline; }
.fsep-c { margin: 0 12px 0 6px; }
.fmt-a { font-size: 18px; font-weight: 400; }
.font-row2 .caret { margin-left: 5px; border-top-color: #bbb; }
.fi-hl { margin-left: 10px; }
.fi-fill { margin-left: 7px; }
.fsep-d { margin: 0 8px 0 7px; }
.fi-al { margin-left: 8px; }
.fsep-e { margin: 0 8px 0 8px; }
.fsep-f { margin: 0 7px 0 8px; }
.collapse {
  position: absolute;
  right: 10px;
  bottom: 4px;
}

/* workspace */
.workspace {
  flex: 1;
  display: flex;
  min-height: 0;
  border-bottom: 1px solid #c6c6c6;
}
.nav-pane {
  width: 33px;
  flex: none;
  background: #fff;
  box-shadow: inset 3px 0 0 #fff, inset 4px 0 0 #a8a8a8;
  border-right: 1px solid #a8a8a8;
  position: relative;
  padding-top: 8px;
}
.nav-pane::after {
  content: "";
  position: absolute;
  top: 0;
  bottom: 0;
  right: 3px;
  width: 1px;
  background: #a8a8a8;
}
.nav-arrows { margin-left: 8px; }
.nav-title {
  writing-mode: vertical-rl;
  transform: rotate(180deg);
  font-size: 12.700px;
  font-weight: 700;
  color: #444;
  margin: 367px 0 0 7px;
  white-space: nowrap;
}
.main {
  flex: 1;
  display: flex;
  flex-direction: column;
  min-width: 0;
}
.doc-tabs {
  height: 24px;
  flex: none;
  background: #f7f7f7;
  border-bottom: 1px solid #a0a0a0;
  display: flex;
  align-items: center;
  padding-left: 2px;
}
.doc-tab {
  width: 92px;
  height: 24px;
  background: #fff;
  border: 1px solid #c8c8c8;
  border-width: 1px 0 0 1px;
  border-radius: 5px 0 0 0;
  display: flex;
  align-items: center;
  gap: 8px;
  padding-left: 5px;
  font-size: 10.700px;
  font-weight: 600;
  color: #a4373a;
  position: relative;
}
.doc-tab::after {
  content: "";
  position: absolute;
  top: -1px;
  right: -6px;
  width: 12px;
  height: 24px;
  background: #fff;
  border: 1px solid #b4b4b4;
  border-width: 1px 1px 0 0;
  border-radius: 0 5px 0 0;
  transform: skewX(22deg);
}
.doc-name {
  position: relative;
  z-index: 1;
}
.doc-close { margin-left: auto; margin-right: 8px; }
.doc {
  flex: 1;
  display: flex;
  min-height: 0;
}
.selector {
  width: 20px;
  flex: none;
  border-right: 1px solid #000;
  padding: 2px 0 0 9px;
}
.sel-arrow {
  display: block;
  width: 0;
  height: 0;
  border-left: 6px solid #000;
  border-top: 6px solid transparent;
  border-bottom: 6px solid transparent;
}

/* the form */
.form {
  flex: 1;
  position: relative;
  min-width: 0;
}
.form-head {
  height: 63px;
  display: flex;
  align-items: center;
  padding: 6px 0 0 19px;
}
.logo {
  width: 138px;
  display: flex;
  align-items: center;
  gap: 2px;
  font-family: "Liberation Sans", sans-serif;
  font-size: 8.500px;
  font-weight: 700;
  letter-spacing: .9px;
  color: #222;
  white-space: nowrap;
}
.form-title {
  margin-left: 455px;
  font-size: 23.100px;
  font-weight: 700;
  color: #7f7f7f;
  white-space: nowrap;
}
.hbar {
  height: 13px;
  background: #a5a5a5;
}
.hbar-top {
  margin-left: 3px;
  width: 1494px;
}
.form-body {
  margin-left: 3px;
  display: grid;
  grid-template-columns: 771px 12px 1fr;
  grid-template-rows: 331px 13px 281px;
}
.vbar-main {
  grid-column: 2;
  grid-row: 1 / 4;
  background: #a5a5a5;
}
.hbar-mid {
  grid-column: 1 / 4;
  grid-row: 2;
  width: 1486px;
}
.cell {
  min-width: 0;
}
.cols {
  display: flex;
  align-items: flex-start;
}
.pane {
  flex: none;
}
.lbl {
  line-height: 18px;
  text-align: center;
  font-size: 13px;
  color: #7f7f7f;
  white-space: nowrap;
}
.lbl-plans { width: 733px; margin-top: 7px; }
.pane-create { width: 357px; }
.lbl-create { width: 404px; margin-top: 15px; }
.vbar {
  flex: none;
  background: #a5a5a5;
  height: 273px;
}
.vbar-plans { width: 5px; margin-top: 19px; }
.lbl-extract { width: 296px; margin-top: 15px; }
.lbl-prod { width: 720px; margin-top: 7px; }
.pane-saisies { width: 352px; }
.lbl-saisies { width: 260px; margin-top: 8px; }
.vbar-prod { width: 3px; margin-top: 27px; }
.lbl-print { width: 416px; margin-top: 12px; }
.lbl-qual { width: 720px; margin-top: 10px; }
.lbl-ventes { width: 704px; margin-top: 10px; }
.pane-vsaisies { width: 351px; }
.lbl-vsaisies { width: 352px; margin-top: 20px; }
.vline {
  width: 1px;
  height: 230px;
  flex: none;
  margin-top: 20px;
  background: #7f7f7f;
}
.lbl-vprint { width: 402px; margin-top: 20px; }

/* command buttons */
.btn {
  display: flex;
  align-items: center;
  justify-content: center;
  text-align: center;
  line-height: 18px;
  padding-bottom: 1px;
  font-size: 13.200px;
  color: #44474d;
  background: linear-gradient(#ebf3fd, #b7d8f9);
  border: 1px solid #9cc3e8;
  border-radius: 3px;
  white-space: nowrap;
}
.btn-emp {
  width: 73px;
  height: 28px;
  margin: 46px 0 0 159px;
  border: 1px dotted #2c3e57;
}
.btn-plans {
  width: 91px;
  height: 50px;
  margin: 29px 0 0 151px;
}
.btn-act {
  width: 60px;
  height: 38px;
  margin: 26px 0 0 166px;
}
.btn-etat {
  width: 110px;
  height: 28px;
  margin: 84px 0 0 100px;
}
.btn-line {
  width: 114px;
  height: 33px;
  margin-left: 75px;
}
.btn-ond { height: 32px; margin-top: 23px; }
.btn-b21 { height: 32px; margin-top: 25px; }
.btn-b20 { margin-top: 23px; }
.btn-b16 { margin-top: 20px; }
.btn-m7 { margin-top: 16px; }
.print-btns {
  display: flex;
  gap: 25px;
  margin: 80px 0 0 105px;
}
.btn-print {
  width: 81px;
  height: 54px;
}
.btn-saisir {
  width: 114px;
  height: 51px;
  margin: 60px 0 0 120px;
}
.btn-tab {
  width: 125px;
  height: 58px;
  margin: 61px 0 0 142px;
}

/* date fields */
.date-row {
  display: flex;
  align-items: center;
  margin: 8px 0 0 106px;
  font-size: 13px;
  color: #7f7f7f;
}
.date-row span {
  width: 111px;
  transform: translateY(-2px);
}
.date-first { margin-top: 22px; }
.field {
  width: 91px;
  height: 21px;
  border: 1px solid #a6a6a6;
  text-align: right;
  padding-right: 1px;
  line-height: 19px;
  color: #44474d;
}
.scribble {
  position: absolute;
  left: 1205px;
  top: 599px;
}

/* status bar */
.statusbar {
  height: 21px;
  flex: none;
  background: #f0f0f0;
  display: flex;
  align-items: center;
  padding-right: 3px;
  font-size: 10.800px;
  color: #555;
}
.status-mode { margin: 0 auto 4px 8px; }
.status-key { margin: 0 16px 4px 0; }
.status-view {
  width: 37px;
  height: 21px;
  display: flex;
  align-items: center;
  justify-content: center;
}
.status-on {
  margin-left: 1px;
  background: #d0d0d0;
}

/* taskbar */
.taskbar {
  height: 40px;
  flex: none;
  display: flex;
  gap: 1px;
  color: #fff;
  background: linear-gradient(90deg, #1b1312, #2a211c 30%, #30241a);
}
.task {
  width: 48px;
  height: 40px;
  display: flex;
  align-items: center;
  justify-content: center;
  position: relative;
}
.icon-taskview { margin-right: 4px; }
.task-run::after {
  content: "";
  position: absolute;
  left: 4px;
  right: 4px;
  bottom: 0;
  height: 2px;
  background: #76b9ed;
}
.task-active {
  background: #5a5a5a;
}
.task-active::after {
  left: 0;
  right: 0;
}
.tray {
  margin-left: auto;
  display: flex;
  align-items: center;
  padding-right: 26px;
}
.tray-bat { margin-left: 12px; }
.tray-vol { margin-left: 9px; }
.clock {
  width: 66px;
  margin-left: 8px;
  display: flex;
  flex-direction: column;
  align-items: center;
  font-size: 11.500px;
  line-height: 18px;
}
.tray-note { margin-left: 14px; }
```
